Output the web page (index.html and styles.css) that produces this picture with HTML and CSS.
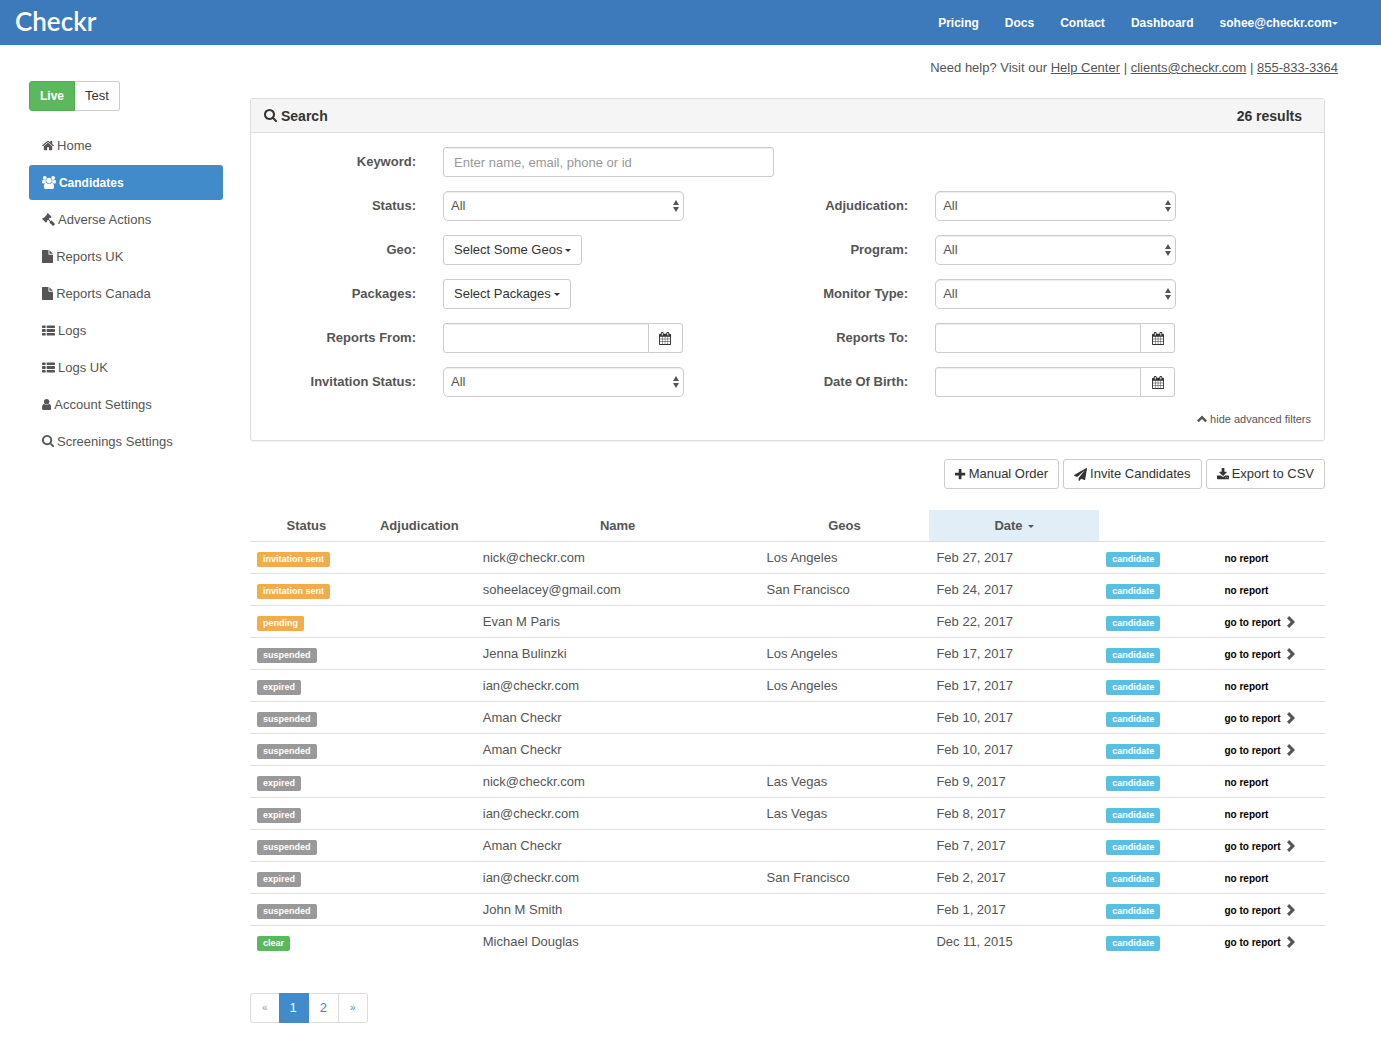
FILE: index.html
```html
<!DOCTYPE html>
<html lang="en">

<head>
  <meta charset="UTF-8">
  <meta name="viewport" content="width=device-width, initial-scale=1.0">
  <title>Checkr - Candidates</title>
  <link rel="stylesheet" href="styles.css">
</head>

<body>

  <!-- shared icon shapes -->
  <svg class="sprite" aria-hidden="true">
    <defs>
      <path id="i-search" d="M1216 832q0-185-131.500-316.500t-316.500-131.500-316.500 131.500-131.500 316.500 131.500 316.500 316.500 131.500 316.500-131.500 131.500-316.500zm512 832q0 52-38 90t-90 38q-54 0-90-38l-343-342q-179 124-399 124-143 0-273.500-55.500t-225-150-150-225-55.500-273.500 55.500-273.500 150-225 225-150 273.500-55.500 273.500 55.500 225 150 150 225 55.500 273.500q0 220-124 399l343 343q37 37 37 90z"/>
      <path id="i-home" d="M1472 992v480q0 26-19 45t-45 19h-384v-384h-256v384h-384q-26 0-45-19t-19-45v-480q0-1 .5-3t.5-3l575-474 575 474q1 2 1 6zm223-69l-62 74q-8 9-21 11h-3q-13 0-21-7l-692-577-692 577q-12 8-24 7-13-2-21-11l-62-74q-8-10-7-23.500t11-21.500l719-599q32-26 76-26t76 26l244 204v-195q0-14 9-23t23-9h192q14 0 23 9t9 23v408l219 182q10 8 11 21.500t-7 23.500z"/>
      <path id="i-users" d="M593 896q-162 5-265 128h-134q-82 0-138-40.500t-56-118.500q0-353 124-353 6 0 43.500 21t97.500 42.500 119 21.500q67 0 133-23-5 37-5 66 0 139 81 256zm1071 637q0 120-73 189.500t-194 69.500h-874q-121 0-194-69.500t-73-189.500q0-53 3.500-103.500t14-109 26.500-108.500 43-97.500 62-81 85.500-53.500 111.500-20q10 0 43 21.500t73 48 107 48 135 21.500 135-21.500 107-48 73-48 43-21.500q61 0 111.500 20t85.500 53.500 62 81 43 97.500 26.500 108.500 14 109 3.500 103.500zm-1024-1277q0 106-75 181t-181 75-181-75-75-181 75-181 181-75 181 75 75 181zm704 384q0 159-112.500 271.500t-271.500 112.500-271.500-112.500-112.500-271.500 112.500-271.500 271.500-112.500 271.500 112.500 112.500 271.500zm576 225q0 78-56 118.500t-138 40.500h-134q-103-123-265-128 81-117 81-256 0-29-5-66 66 23 133 23 59 0 119-21.500t97.500-42.500 43.500-21q124 0 124 353zm-128-609q0 106-75 181t-181 75-181-75-75-181 75-181 181-75 181 75 75 181z"/>
      <path id="i-gavel" d="M1771 1536q0 53-37 90l-107 108q-39 37-91 37-53 0-90-37l-363-364q-38-36-38-90 0-53 43-96l-256-256-126 126q-14 14-34 14t-34-14q2 2 12.500 12t12.500 13 10 11.500 10 13.500 6 13.500 5.500 16.500 1.500 18q0 38-28 68-3 3-16.500 18t-19 20.500-18.500 16.500-22 15.500-22 9-26 4.500q-40 0-68-28l-408-408q-28-28-28-68 0-13 4.500-26t9-22 15.500-22 16.500-18.500 20.500-19 18-16.500q30-28 68-28 10 0 18 1.500t16.500 5.500 13.500 6 13.500 10 11.500 10 13 12.500 12 12.500q-14-14-14-34t14-34l348-348q14-14 34-14t34 14q-2-2-12.500-12t-12.500-13-10-11.500-10-13.500-6-13.500-5.500-16.500-1.500-18q0-38 28-68 3-3 16.500-18t19-20.500 18.500-16.500 22-15.500 22-9 26-4.500q40 0 68 28l408 408q28 28 28 68 0 13-4.500 26t-9 22-15.500 22-16.500 18.500-20.500 19-18 16.500q-30 28-68 28-10 0-18-1.500t-16.500-5.500-13.500-6-13.500-10-11.500-10-13-12.500-12-12.500q14 14 14 34t-14 34l-126 126 256 256q43-43 96-43 52 0 91 37l363 363q37 39 37 91z"/>
      <path id="i-file" d="M1152 512v-472q22 14 36 28l408 408q14 14 28 36h-472zm-128 32q0 40 28 68t68 28h544v1056q0 40-28 68t-68 28h-1344q-40 0-68-28t-28-68v-1600q0-40 28-68t68-28h800v544z"/>
      <path id="i-list" d="M96 192h320q96 0 96 96v160q0 96-96 96h-320q-96 0-96-96v-160q0-96 96-96zm640 0h960q96 0 96 96v160q0 96-96 96h-960q-96 0-96-96v-160q0-96 96-96zm-640 512h320q96 0 96 96v192q0 96-96 96h-320q-96 0-96-96v-192q0-96 96-96zm640 0h960q96 0 96 96v192q0 96-96 96h-960q-96 0-96-96v-192q0-96 96-96zm-640 544h320q96 0 96 96v160q0 96-96 96h-320q-96 0-96-96v-160q0-96 96-96zm640 0h960q96 0 96 96v160q0 96-96 96h-960q-96 0-96-96v-160q0-96 96-96z"/>
      <path id="i-user" d="M1536 1399q0 109-62.500 187t-150.500 78h-854q-88 0-150.500-78t-62.500-187q0-85 8.500-160.500t31.500-152 58.500-131 94-89 134.500-34.500q131 128 313 128t313-128q76 0 134.500 34.500t94 89 58.500 131 31.500 152 8.500 160.500zm-256-887q0 159-112.500 271.500t-271.500 112.500-271.500-112.500-112.500-271.500 112.500-271.500 271.500-112.500 271.500 112.500 112.500 271.500z"/>
      <path id="i-calendar" d="M192 1664h288v-288h-288v288zm352 0h320v-288h-320v288zm-352-352h288v-320h-288v320zm352 0h320v-320h-320v320zm-352-384h288v-288h-288v288zm736 736h320v-288h-320v288zm-384-736h320v-288h-320v288zm768 736h288v-288h-288v288zm-384-352h320v-320h-320v320zm-352-864v-288q0-13-9.500-22.500t-22.500-9.500h-64q-13 0-22.500 9.500t-9.500 22.500v288q0 13 9.500 22.500t22.500 9.500h64q13 0 22.500-9.500t9.500-22.500zm736 864h288v-320h-288v320zm-384-384h320v-288h-320v288zm384 0h288v-288h-288v288zm32-480v-288q0-13-9.500-22.500t-22.500-9.500h-64q-13 0-22.500 9.500t-9.500 22.500v288q0 13 9.500 22.500t22.500 9.500h64q13 0 22.500-9.500t9.500-22.500zm384-64v1280q0 52-38 90t-90 38h-1408q-52 0-90-38t-38-90v-1280q0-52 38-90t90-38h128v-96q0-66 47-113t113-47h64q66 0 113 47t47 113v96h384v-96q0-66 47-113t113-47h64q66 0 113 47t47 113v96h128q52 0 90 38t38 90z"/>
      <path id="i-plus" d="M1600 736v192q0 40-28 68t-68 28h-416v416q0 40-28 68t-68 28h-192q-40 0-68-28t-28-68v-416h-416q-40 0-68-28t-28-68v-192q0-40 28-68t68-28h416v-416q0-40 28-68t68-28h192q40 0 68 28t28 68v416h416q40 0 68 28t28 68z"/>
      <path id="i-plane" d="M1764 11q33 24 27 64l-256 1536q-5 29-32 45-14 8-31 8-11 0-24-5l-453-185-242 295q-18 23-49 23-13 0-22-4-19-7-30.500-23.500t-11.500-36.500v-349l864-1059-1069 925-395-162q-37-14-40-55-2-40 32-59l1664-960q15-9 32-9 20 0 36 11z"/>
      <path id="i-download" d="M1344 1344q0-26-19-45t-45-19-45 19-19 45 19 45 45 19 45-19 19-45zm256 0q0-26-19-45t-45-19-45 19-19 45 19 45 45 19 45-19 19-45zm128-224v320q0 40-28 68t-68 28h-1472q-40 0-68-28t-28-68v-320q0-40 28-68t68-28h465l135 136q58 56 136 56t136-56l136-136h464q40 0 68 28t28 68zm-325-569q17 41-14 70l-448 448q-18 19-45 19t-45-19l-448-448q-31-29-14-70 17-39 59-39h256v-448q0-26 19-45t45-19h256q26 0 45 19t19 45v448h256q42 0 59 39z"/>
      <path id="i-up" d="M5 0.500L10 5.500L8.300 7.200L5 3.900L1.700 7.200L0 5.500z"/>
      <path id="i-right" d="M2.200 0L8 6L2.200 12L0 9.800L3.700 6L0 2.200z"/>
    </defs>
  </svg>

  <header class="navbar">
    <a class="brand" href="#">Checkr</a>
    <nav class="nav-links">
      <a href="#">Pricing</a>
      <a href="#">Docs</a>
      <a href="#">Contact</a>
      <a href="#">Dashboard</a>
      <a href="#">sohee@checkr.com<span class="caret"></span></a>
    </nav>
  </header>

  <div class="page">

    <aside class="sidebar">
      <div class="mode-switch">
        <button type="button" class="btn mode-live">Live</button>
        <button type="button" class="btn mode-test">Test</button>
      </div>
      <nav class="side-nav">
        <a href="#"><svg class="icon" viewBox="64 0 1664 1792"><use href="#i-home"/></svg>Home</a>
        <a href="#" class="active"><svg class="icon" viewBox="0 0 1920 1792"><use href="#i-users"/></svg>Candidates</a>
        <a href="#"><svg class="icon" viewBox="0 0 1792 1792"><use href="#i-gavel"/></svg>Adverse Actions</a>
        <a href="#"><svg class="icon" viewBox="128 0 1536 1792"><use href="#i-file"/></svg>Reports UK</a>
        <a href="#"><svg class="icon" viewBox="128 0 1536 1792"><use href="#i-file"/></svg>Reports Canada</a>
        <a href="#"><svg class="icon" viewBox="0 0 1792 1792"><use href="#i-list"/></svg>Logs</a>
        <a href="#"><svg class="icon" viewBox="0 0 1792 1792"><use href="#i-list"/></svg>Logs UK</a>
        <a href="#"><svg class="icon" viewBox="256 0 1280 1792"><use href="#i-user"/></svg>Account Settings</a>
        <a href="#"><svg class="icon" viewBox="64 128 1664 1792"><use href="#i-search"/></svg>Screenings Settings</a>
      </nav>
    </aside>

    <main class="main">
      <p class="help">Need help? Visit our <a href="#">Help Center</a> | <a href="#">clients@checkr.com</a> | <a href="#">855-833-3364</a></p>

      <div class="content">
        <section class="panel">
          <div class="panel-heading">
            <h2><svg class="icon icon-lg" viewBox="64 128 1664 1792"><use href="#i-search"/></svg>Search</h2>
            <span>26 results</span>
          </div>

          <form class="panel-body">
            <div class="filters">
              <label for="keyword">Keyword:</label>
              <input type="text" id="keyword" class="field keyword" placeholder="Enter name, email, phone or id">

              <label for="status" class="first">Status:</label>
              <select id="status" class="field"><option>All</option></select>
              <label for="adjudication">Adjudication:</label>
              <select id="adjudication" class="field"><option>All</option></select>

              <label for="geo">Geo:</label>
              <button type="button" id="geo" class="btn dropdown">Select Some Geos<span class="caret"></span></button>
              <label for="program">Program:</label>
              <select id="program" class="field"><option>All</option></select>

              <label for="packages">Packages:</label>
              <button type="button" id="packages" class="btn dropdown">Select Packages<span class="caret"></span></button>
              <label for="monitor">Monitor Type:</label>
              <select id="monitor" class="field"><option>All</option></select>

              <label for="from">Reports From:</label>
              <div class="date-group">
                <input type="text" id="from" class="field">
                <button type="button" class="btn" aria-label="Pick date"><svg class="icon" viewBox="64 0 1664 1792"><use href="#i-calendar"/></svg></button>
              </div>
              <label for="to">Reports To:</label>
              <div class="date-group">
                <input type="text" id="to" class="field">
                <button type="button" class="btn" aria-label="Pick date"><svg class="icon" viewBox="64 0 1664 1792"><use href="#i-calendar"/></svg></button>
              </div>

              <label for="invitation">Invitation Status:</label>
              <select id="invitation" class="field"><option>All</option></select>
              <label for="dob">Date Of Birth:</label>
              <div class="date-group">
                <input type="text" id="dob" class="field">
                <button type="button" class="btn" aria-label="Pick date"><svg class="icon" viewBox="64 0 1664 1792"><use href="#i-calendar"/></svg></button>
              </div>
            </div>
            <a class="toggle-filters" href="#"><svg class="icon-up" viewBox="0 0 10 8"><use href="#i-up"/></svg>hide advanced filters</a>
          </form>
        </section>

        <div class="actions">
          <button type="button" class="btn"><svg class="icon" viewBox="192 0 1408 1792"><use href="#i-plus"/></svg>Manual Order</button>
          <button type="button" class="btn"><svg class="icon" viewBox="0 0 1792 1792"><use href="#i-plane"/></svg>Invite Candidates</button>
          <button type="button" class="btn"><svg class="icon" viewBox="64 0 1664 1792"><use href="#i-download"/></svg>Export to CSV</button>
        </div>

        <table class="results">
          <thead>
            <tr>
              <th class="col-status">Status</th>
              <th class="col-adj">Adjudication</th>
              <th class="col-name">Name</th>
              <th class="col-geos">Geos</th>
              <th class="col-date sorted">Date <span class="caret"></span></th>
              <th class="col-link"></th>
              <th class="col-report"></th>
            </tr>
          </thead>
          <tbody>
            <tr>
              <td><span class="label label-warning">invitation sent</span></td><td></td><td>nick@checkr.com</td><td>Los Angeles</td><td>Feb 27, 2017</td>
              <td><a href="#" class="label label-info">candidate</a></td>
              <td><span class="report">no report</span></td>
            </tr>
            <tr>
              <td><span class="label label-warning">invitation sent</span></td><td></td><td>soheelacey@gmail.com</td><td>San Francisco</td><td>Feb 24, 2017</td>
              <td><a href="#" class="label label-info">candidate</a></td>
              <td><span class="report">no report</span></td>
            </tr>
            <tr>
              <td><span class="label label-warning">pending</span></td><td></td><td>Evan M Paris</td><td></td><td>Feb 22, 2017</td>
              <td><a href="#" class="label label-info">candidate</a></td>
              <td><a href="#" class="report">go to report<svg class="icon-right" viewBox="0 0 8 12"><use href="#i-right"/></svg></a></td>
            </tr>
            <tr>
              <td><span class="label">suspended</span></td><td></td><td>Jenna Bulinzki</td><td>Los Angeles</td><td>Feb 17, 2017</td>
              <td><a href="#" class="label label-info">candidate</a></td>
              <td><a href="#" class="report">go to report<svg class="icon-right" viewBox="0 0 8 12"><use href="#i-right"/></svg></a></td>
            </tr>
            <tr>
              <td><span class="label">expired</span></td><td></td><td>ian@checkr.com</td><td>Los Angeles</td><td>Feb 17, 2017</td>
              <td><a href="#" class="label label-info">candidate</a></td>
              <td><span class="report">no report</span></td>
            </tr>
            <tr>
              <td><span class="label">suspended</span></td><td></td><td>Aman Checkr</td><td></td><td>Feb 10, 2017</td>
              <td><a href="#" class="label label-info">candidate</a></td>
              <td><a href="#" class="report">go to report<svg class="icon-right" viewBox="0 0 8 12"><use href="#i-right"/></svg></a></td>
            </tr>
            <tr>
              <td><span class="label">suspended</span></td><td></td><td>Aman Checkr</td><td></td><td>Feb 10, 2017</td>
              <td><a href="#" class="label label-info">candidate</a></td>
              <td><a href="#" class="report">go to report<svg class="icon-right" viewBox="0 0 8 12"><use href="#i-right"/></svg></a></td>
            </tr>
            <tr>
              <td><span class="label">expired</span></td><td></td><td>nick@checkr.com</td><td>Las Vegas</td><td>Feb 9, 2017</td>
              <td><a href="#" class="label label-info">candidate</a></td>
              <td><span class="report">no report</span></td>
            </tr>
            <tr>
              <td><span class="label">expired</span></td><td></td><td>ian@checkr.com</td><td>Las Vegas</td><td>Feb 8, 2017</td>
              <td><a href="#" class="label label-info">candidate</a></td>
              <td><span class="report">no report</span></td>
            </tr>
            <tr>
              <td><span class="label">suspended</span></td><td></td><td>Aman Checkr</td><td></td><td>Feb 7, 2017</td>
              <td><a href="#" class="label label-info">candidate</a></td>
              <td><a href="#" class="report">go to report<svg class="icon-right" viewBox="0 0 8 12"><use href="#i-right"/></svg></a></td>
            </tr>
            <tr>
              <td><span class="label">expired</span></td><td></td><td>ian@checkr.com</td><td>San Francisco</td><td>Feb 2, 2017</td>
              <td><a href="#" class="label label-info">candidate</a></td>
              <td><span class="report">no report</span></td>
            </tr>
            <tr>
              <td><span class="label">suspended</span></td><td></td><td>John M Smith</td><td></td><td>Feb 1, 2017</td>
              <td><a href="#" class="label label-info">candidate</a></td>
              <td><a href="#" class="report">go to report<svg class="icon-right" viewBox="0 0 8 12"><use href="#i-right"/></svg></a></td>
            </tr>
            <tr>
              <td><span class="label label-success">clear</span></td><td></td><td>Michael Douglas</td><td></td><td>Dec 11, 2015</td>
              <td><a href="#" class="label label-info">candidate</a></td>
              <td><a href="#" class="report">go to report<svg class="icon-right" viewBox="0 0 8 12"><use href="#i-right"/></svg></a></td>
            </tr>
          </tbody>
        </table>

        <nav class="pagination">
          <a href="#" class="arrow disabled">«</a>
          <a href="#" class="current">1</a>
          <a href="#">2</a>
          <a href="#" class="arrow">»</a>
        </nav>
      </div>
    </main>

  </div>

</body>

</html>
```
FILE: styles.css
```css
* {
  box-sizing: border-box;
}

body {
  margin: 0;
  font-family: "Liberation Sans", Arial, sans-serif;
  font-size: 13px;
  line-height: 18px;
  color: #555;
  background-color: #fff;
}

a {
  color: inherit;
  text-decoration: none;
}

button,
input,
select {
  font: inherit;
}

.sprite {
  display: none;
}

.icon {
  height: 13px;
  flex: none;
  fill: currentColor;
}

.icon-lg {
  height: 14px;
}

.caret {
  display: inline-block;
  border-top: 3px solid;
  border-left: 3px solid transparent;
  border-right: 3px solid transparent;
  vertical-align: middle;
}

/* top bar */
.navbar {
  display: flex;
  justify-content: space-between;
  align-items: center;
  height: 45px;
  padding: 0 43px 0 15px;
  background-color: #3c7abc;
  color: #fff;
}

.brand {
  font-family: Lato, sans-serif;
  font-size: 26px;
  line-height: 42px;
  font-weight: 600;
  padding-bottom: 3px;
}

.nav-links {
  display: flex;
  gap: 26px;
  font-size: 12px;
  font-weight: bold;
}

.page {
  display: grid;
  grid-template-columns: 194px minmax(0, 1fr);
  gap: 27px;
  padding: 0 43px 0 29px;
}

/* buttons */
.btn {
  display: inline-flex;
  align-items: center;
  justify-content: center;
  gap: 3px;
  height: 30px;
  padding: 0 10px;
  border: 1px solid #ccc;
  border-radius: 3px;
  background-color: #fff;
  color: #333;
  white-space: nowrap;
  cursor: pointer;
}

.btn:hover {
  background-color: #ebebeb;
}

/* sidebar */
.sidebar {
  padding-top: 36px;
}

.mode-switch {
  display: flex;
}

.mode-switch .mode-live {
  border-color: #4cae4c;
  border-radius: 3px 0 0 3px;
  background-color: #5cb85c;
  color: #fff;
  font-size: 12px;
  font-weight: bold;
}

.mode-switch .mode-test {
  border-left: none;
  border-radius: 0 3px 3px 0;
}

.side-nav {
  display: flex;
  flex-direction: column;
  gap: 2px;
  margin-top: 17px;
}

.side-nav a {
  display: flex;
  align-items: center;
  gap: 3px;
  height: 35px;
  padding: 0 13px;
  border-radius: 3px;
}

.side-nav .active {
  background-color: #428bca;
  color: #fff;
  font-size: 12px;
  font-weight: bold;
}

/* main column */
.help {
  margin: 14px 0 21px;
  text-align: right;
}

.help a {
  text-decoration: underline;
}

.content {
  padding-right: 13px;
}

/* search panel */
.panel {
  border: 1px solid #ddd;
  border-radius: 3px;
  box-shadow: 0 1px 1px rgba(0, 0, 0, 0.05);
}

.panel-heading {
  display: flex;
  justify-content: space-between;
  align-items: center;
  height: 34px;
  padding: 0 22px 0 13px;
  border-bottom: 1px solid #ddd;
  background-color: #f5f5f5;
  color: #333;
  font-size: 14px;
  font-weight: bold;
}

.panel-heading h2 {
  display: flex;
  align-items: center;
  gap: 4px;
  margin: 0;
  font-size: 14px;
}

.panel-body {
  padding: 14px 0 12px;
}

.filters {
  display: grid;
  grid-template-columns: 165px 46fr 107px 54fr;
  gap: 14px 27px;
  align-items: center;
}

.filters label {
  font-weight: bold;
  text-align: right;
}

.filters .first {
  grid-column: 1;
}

.field {
  width: 100%;
  height: 30px;
  max-width: 241px;
  padding: 0 10px;
  border: 1px solid #ccc;
  border-radius: 3px;
  background-color: #fff;
  color: #555;
  box-shadow: inset 0 1px 1px rgba(0, 0, 0, 0.075);
}

.keyword {
  max-width: none;
}

.field::placeholder {
  color: #999;
}

select.field {
  appearance: none;
  padding: 0 7px;
  border-radius: 5px;
  background: #fff url("data:image/svg+xml,%3Csvg xmlns='http://www.w3.org/2000/svg' width='6' height='12'%3E%3Cpath d='M3 0L6 5H0zM3 12L0 7H6z' fill='%23555'/%3E%3C/svg%3E") no-repeat right 4px center;
}

.dropdown {
  justify-self: start;
}

.date-group {
  display: flex;
  max-width: 240px;
}

.date-group .field {
  min-width: 0;
  flex: 1;
  border-radius: 3px 0 0 3px;
}

.date-group .btn {
  width: 34px;
  padding: 0;
  border-left: none;
  border-radius: 0 3px 3px 0;
}

.toggle-filters {
  display: flex;
  justify-content: flex-end;
  align-items: center;
  gap: 3px;
  margin-top: 13px;
  padding-right: 13px;
  font-size: 11px;
}

.icon-up {
  width: 10px;
  height: 8px;
  fill: currentColor;
}

.actions {
  display: flex;
  justify-content: flex-end;
  gap: 4px;
  margin-top: 18px;
}

/* results */
.results {
  width: 100%;
  margin-top: 21px;
  border-collapse: collapse;
  table-layout: fixed;
}

.col-status,
.col-adj {
  width: 10.5%;
}

.col-name {
  width: 26.4%;
}

.col-geos,
.col-date {
  width: 15.8%;
}

.col-link {
  width: 11%;
}

.results th,
.results td {
  height: 32px;
  padding: 1px 7px 0;
  text-align: left;
  white-space: nowrap;
}

.results th {
  height: 31px;
  text-align: center;
}

.results td {
  border-top: 1px solid #ddd;
}

.results .sorted {
  background-color: #e1eef7;
}

.sorted .caret {
  margin-left: 2px;
}

.label {
  display: inline-block;
  margin-top: 3px;
  padding: 0 6px;
  border-radius: 2px;
  background-color: #999;
  color: #fff;
  font-size: 9px;
  font-weight: bold;
  line-height: 15px;
  vertical-align: middle;
}

.label-warning {
  background-color: #f0ad4e;
}

.label-info {
  background-color: #5bc0de;
}

.label-success {
  background-color: #5cb85c;
}

.report {
  display: flex;
  align-items: center;
  gap: 6px;
  padding-top: 2px;
  color: #000;
  font-size: 10px;
  font-weight: bold;
}

.icon-right {
  width: 8px;
  height: 12px;
  margin-bottom: 2px;
  fill: #555;
}

/* pagination */
.pagination {
  display: flex;
  margin-top: 36px;
}

.pagination a {
  height: 30px;
  padding: 0 11px;
  border: 1px solid #ddd;
  border-left: none;
  color: #428bca;
  line-height: 28px;
}

.pagination a:first-child {
  border-left: 1px solid #ddd;
  border-radius: 3px 0 0 3px;
}

.pagination a:last-child {
  border-radius: 0 3px 3px 0;
}

.pagination .arrow {
  font-size: 10px;
}

.pagination .disabled {
  border-right: none;
  color: #999;
}

.pagination .current {
  border-color: #428bca;
  background-color: #428bca;
  color: #fff;
}
```
